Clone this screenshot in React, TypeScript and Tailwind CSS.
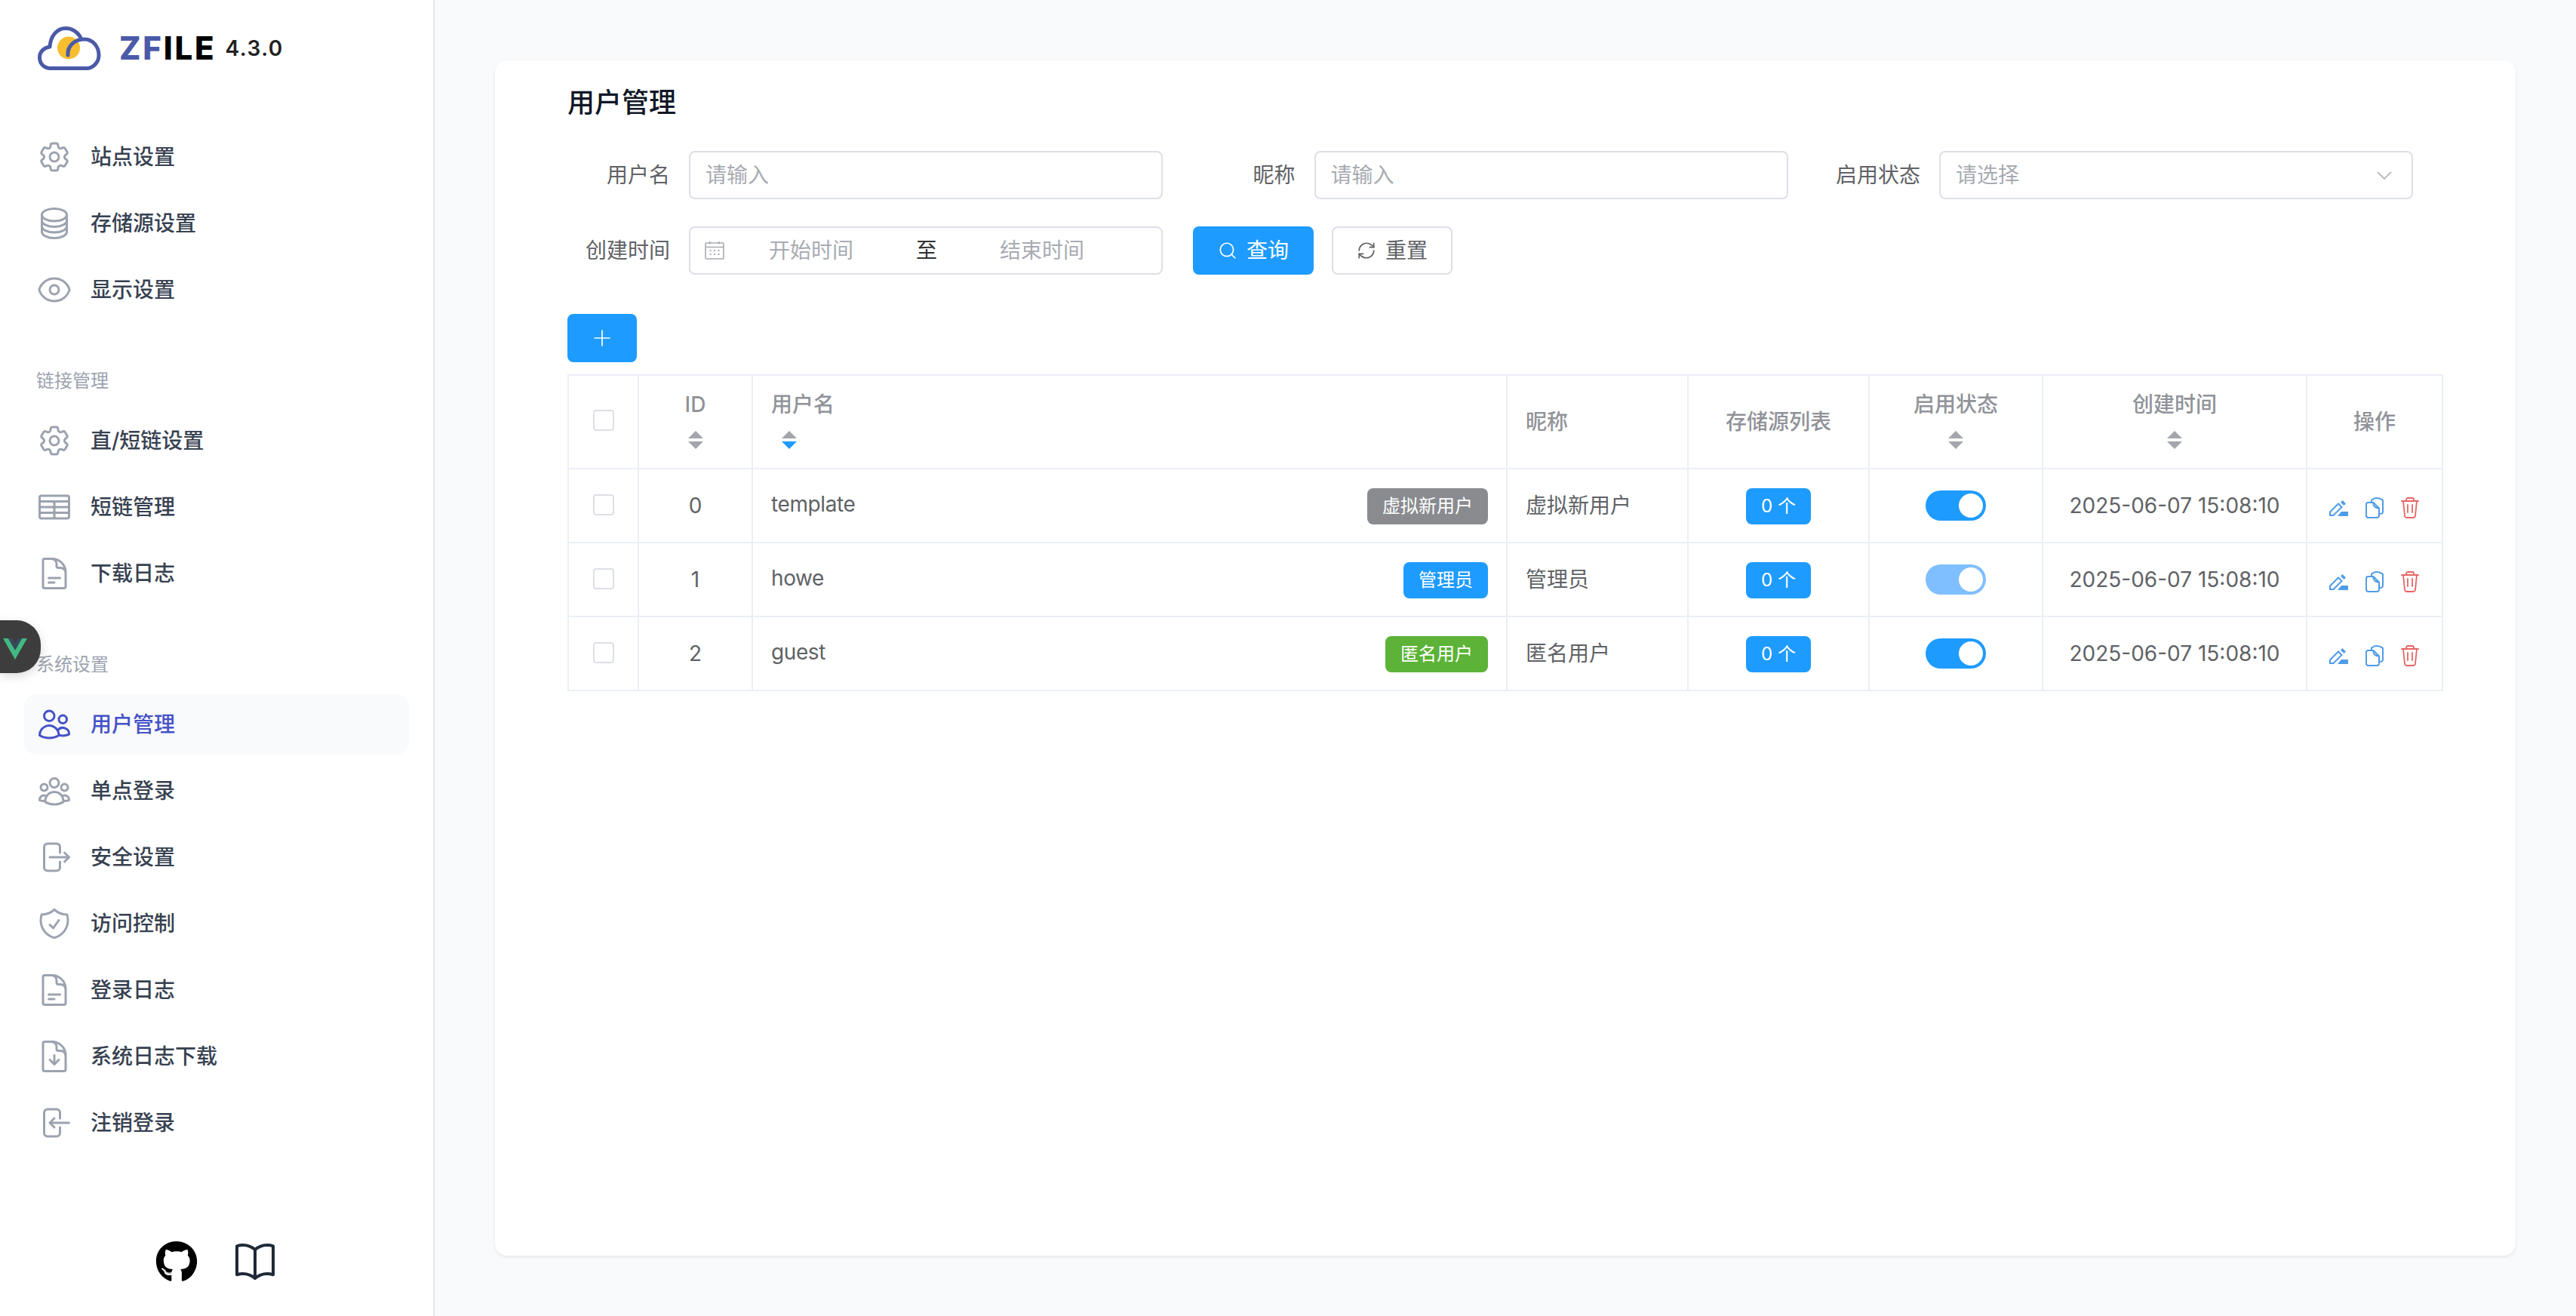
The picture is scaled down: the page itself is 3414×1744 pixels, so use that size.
import React from "react";
import {
  HiOutlineCog6Tooth,
  HiOutlineCircleStack,
  HiOutlineEye,
  HiOutlineTableCells,
  HiOutlineDocumentText,
  HiOutlineUsers,
  HiOutlineUserGroup,
  HiOutlineShieldCheck,
  HiOutlineDocumentArrowDown,
  HiOutlineBookOpen,
} from "react-icons/hi2";
import { FaGithub } from "react-icons/fa";
import { Search, RefreshCw, Plus } from "lucide-react";

type IconT = React.ComponentType<{ className?: string }>;

const LogoutOut: IconT = ({ className }) => (
  <svg viewBox="0 0 24 24" fill="none" stroke="currentColor" strokeWidth={1.5} strokeLinecap="round" strokeLinejoin="round" className={className}>
    <path d="M15.75 9V5.25A2.25 2.25 0 0013.5 3h-6a2.25 2.25 0 00-2.25 2.25v13.5A2.25 2.25 0 007.5 21h6a2.25 2.25 0 002.25-2.25V15m3 0l3-3m0 0l-3-3m3 3H9" />
  </svg>
);
const LogoutIn: IconT = ({ className }) => (
  <svg viewBox="0 0 24 24" fill="none" stroke="currentColor" strokeWidth={1.5} strokeLinecap="round" strokeLinejoin="round" className={className}>
    <path d="M15.75 9V5.25A2.25 2.25 0 0013.5 3h-6a2.25 2.25 0 00-2.25 2.25v13.5A2.25 2.25 0 007.5 21h6a2.25 2.25 0 002.25-2.25V15M12 9l-3 3m0 0l3 3m-3-3h12.75" />
  </svg>
);

function Logo() {
  return (
    <svg viewBox="0 0 84 58" width={84} height={58} fill="none">
      <circle cx="41" cy="28.5" r="15" fill="#f6bd2f" />
      <path
        d="M40 38C39 25 50 17 62 17C73 17 81 27 81 38C81 48 73 55.5 65 55.5H17C8 55.5 2.5 49 2.5 41C2.5 33 9 28 16 27C17 12 26 2.5 37 2.5C46 2.5 54 8 58 17"
        stroke="#4a5aa8"
        strokeWidth="5"
        strokeLinecap="round"
        strokeLinejoin="round"
      />
    </svg>
  );
}

function NavItem({ icon: Icon, label, active }: { icon: IconT; label: string; active?: boolean }) {
  return (
    <div
      className={`flex h-[80px] items-center gap-[24px] rounded-[16px] px-[16px] text-[28px] font-medium ${
        active ? "bg-[#f9fafb] text-[#4452c8]" : "text-[#374151]"
      }`}
    >
      <Icon className={`h-[48px] w-[48px] shrink-0 ${active ? "text-[#4452c8]" : "text-[#9ca3af]"}`} />
      <span>{label}</span>
    </div>
  );
}

function NavHeading({ children }: { children: React.ReactNode }) {
  return <div className="px-[16px] pb-[23px] pt-[65px] text-[24px] leading-[32px] text-[#9ca3af]">{children}</div>;
}

function Sidebar() {
  return (
    <aside className="flex h-full w-[576px] shrink-0 flex-col border-r-2 border-[#e5e7eb] bg-white px-[32px]">
      <div className="flex items-center pl-[18px] pt-[35px]">
        <Logo />
        <span className="ml-[24px] text-[42px] font-extrabold leading-[58px] tracking-[2.8px]">
          <span className="text-[#4a5aa8]">ZF</span>
          <span className="text-black">ILE</span>
        </span>
        <span className="ml-[12px] text-[28px] font-semibold leading-[58px] tracking-[1.5px] text-[#222222]">4.3.0</span>
      </div>
      <nav className="mt-[75px] flex flex-col">
        <div className="flex flex-col gap-[8px]">
          <NavItem icon={HiOutlineCog6Tooth} label="站点设置" />
          <NavItem icon={HiOutlineCircleStack} label="存储源设置" />
          <NavItem icon={HiOutlineEye} label="显示设置" />
        </div>
        <NavHeading>链接管理</NavHeading>
        <div className="flex flex-col gap-[8px]">
          <NavItem icon={HiOutlineCog6Tooth} label="直/短链设置" />
          <NavItem icon={HiOutlineTableCells} label="短链管理" />
          <NavItem icon={HiOutlineDocumentText} label="下载日志" />
        </div>
        <NavHeading>系统设置</NavHeading>
        <div className="flex flex-col gap-[8px]">
          <NavItem icon={HiOutlineUsers} label="用户管理" active />
          <NavItem icon={HiOutlineUserGroup} label="单点登录" />
          <NavItem icon={LogoutOut} label="安全设置" />
          <NavItem icon={HiOutlineShieldCheck} label="访问控制" />
          <NavItem icon={HiOutlineDocumentText} label="登录日志" />
          <NavItem icon={HiOutlineDocumentArrowDown} label="系统日志下载" />
          <NavItem icon={LogoutIn} label="注销登录" />
        </div>
      </nav>
      <div className="mt-auto flex items-center justify-center gap-[44px] pb-[40px] pl-[2px]">
        <FaGithub className="h-[56px] w-[56px] text-black" />
        <HiOutlineBookOpen className="h-[64px] w-[64px] text-[#1f2937]" />
      </div>
    </aside>
  );
}

function Field({ label, children }: { label: string; children: React.ReactNode }) {
  return (
    <div className="flex w-[789px] items-center">
      <label className="w-[161px] shrink-0 pr-[25px] text-right text-[28px] text-[#606266]">{label}</label>
      {children}
    </div>
  );
}

function TextInput() {
  return (
    <input
      placeholder="请输入"
      className="h-[64px] w-[628px] rounded-[8px] border-2 border-[#dcdfe6] bg-white px-[20px] text-[28px] outline-none placeholder:text-[#a8abb2]"
    />
  );
}

function CalendarIcon() {
  return (
    <svg viewBox="0 0 28 26" width={28} height={26} fill="none" stroke="#a8abb2" strokeWidth="1.6" className="shrink-0">
      <rect x="2" y="3" width="24" height="21" rx="1" />
      <path d="M2 8.5H26M8 1V4.5M20 1V4.5" />
      <path d="M7.5 13H9.5M13 13H15M18.5 13H20.5M7.5 18H9.5M13 18H15M18.5 18H20.5" strokeWidth="2" />
    </svg>
  );
}

function Chevron() {
  return (
    <svg viewBox="0 0 20 11" width={20} height={11} fill="none" stroke="#a8abb2" strokeWidth="1.6">
      <path d="M1 1L10 10L19 1" />
    </svg>
  );
}

function Carets({ active }: { active?: boolean }) {
  return (
    <span className="mt-[13px] flex w-[48px] flex-col items-center gap-[4px]">
      <span className="h-0 w-0 border-x-[10px] border-b-[10px] border-x-transparent border-b-[#a3a6ad]" />
      <span className={`h-0 w-0 border-x-[10px] border-t-[10px] border-x-transparent ${active ? "border-t-[#1e9bff]" : "border-t-[#a3a6ad]"}`} />
    </span>
  );
}

function SortHead({ children, left, active }: { children: React.ReactNode; left?: boolean; active?: boolean }) {
  return (
    <div className={`flex flex-col pb-[10px] ${left ? "items-start" : "items-center"}`}>
      <span className="h-[44px] leading-[44px]">{children}</span>
      <Carets active={active} />
    </div>
  );
}

function Checkbox({ className }: { className: string }) {
  return <span className={`mx-auto block h-[28px] w-[28px] rounded-[4px] border-2 border-[#dcdfe6] bg-white ${className}`} />;
}

function Tag({ children, color }: { children: React.ReactNode; color: string }) {
  return (
    <span className={`mt-[2px] inline-flex h-[48px] items-center justify-center rounded-[8px] px-[20px] text-[24px] text-white ${color}`}>
      {children}
    </span>
  );
}

function Toggle({ faded }: { faded?: boolean }) {
  return (
    <span className={`mx-auto flex h-[40px] w-[80px] items-center justify-end rounded-full pr-[4px] ${faded ? "bg-[#80bfff]" : "bg-[#1e9bff]"}`}>
      <span className="h-[32px] w-[32px] rounded-full bg-white" />
    </span>
  );
}

function EditIcon() {
  return (
    <svg viewBox="0 0 25 21" width={25} height={21} fill="#4f9ce8" stroke="none">
      <path d="M1 20V15.5L12 4.5L16.5 9L5.5 20Z" fill="none" stroke="#4f9ce8" strokeWidth="2" />
      <path d="M15 2.5L17.5 0L22 4.5L19.5 7Z" />
      <path d="M16 15H25V21H11Z" />
    </svg>
  );
}

function CopyIcon() {
  return (
    <svg viewBox="0 0 24 28" width={24} height={28} fill="none" stroke="#4f9ce8" strokeWidth="2" strokeLinejoin="round">
      <path d="M8 6.5V4.5C8 3 9.5 2.5 10.5 2.5C11 1.2 14 1 15 1C16.5 1 19 1.2 20 2.5C22 2.5 23 3.5 23 5V19C23 21 21.5 22 19 22H18" />
      <path d="M3.5 7H10.5L18 14.5V24C18 25.8 16.8 27 15 27H4C2 27 1 25.8 1 24V9.5C1 8 2 7 3.5 7Z" />
      <path d="M10.5 7C9.8 11 12.5 14.5 18 14.5" />
    </svg>
  );
}

function TrashIcon() {
  return (
    <svg viewBox="0 0 24 28" width={24} height={28} fill="none" stroke="#e86464" strokeWidth="1.8" strokeLinecap="round" strokeLinejoin="round">
      <path d="M1 5H23" />
      <path d="M7 5V3C7 1.8 8 1 9 1H15C16 1 17 1.8 17 3V5" />
      <path d="M3 5L5 24.5C5.2 26 6 27 7.5 27H16.5C18 27 18.8 26 19 24.5L21 5" />
      <path d="M9 10V20M15 10V20" />
    </svg>
  );
}

const rows = [
  { id: "0", name: "template", nick: "虚拟新用户", color: "bg-[#898b8f]", faded: false },
  { id: "1", name: "howe", nick: "管理员", color: "bg-[#1e9bff]", faded: true },
  { id: "2", name: "guest", nick: "匿名用户", color: "bg-[#5cb338]", faded: false },
];

const th = "border-2 border-[#ebeef5] px-[24px] text-[28px] font-medium text-[#909399]";
const td = "border-2 border-[#ebeef5] px-[24px] text-[28px] text-[#606266]";

function UserTable() {
  return (
    <table className="mt-[16px] w-[2484px] table-fixed border-collapse">
      <colgroup>
        <col className="w-[93px]" />
        <col className="w-[151px]" />
        <col className="w-[1000px]" />
        <col className="w-[240px]" />
        <col className="w-[240px]" />
        <col className="w-[230px]" />
        <col className="w-[350px]" />
        <col className="w-[180px]" />
      </colgroup>
      <thead>
        <tr className="h-[124px]">
          <th className={th}><Checkbox className="mb-[4px]" /></th>
          <th className={th}><SortHead>ID</SortHead></th>
          <th className={`${th} text-left`}><SortHead left active>用户名</SortHead></th>
          <th className={`${th} text-left`}>昵称</th>
          <th className={th}>存储源列表</th>
          <th className={th}><SortHead>启用状态</SortHead></th>
          <th className={th}><SortHead>创建时间</SortHead></th>
          <th className={th}>操作</th>
        </tr>
      </thead>
      <tbody>
        {rows.map((r) => (
          <tr key={r.id} className="h-[98px]">
            <td className={td}><Checkbox className="mb-[2px]" /></td>
            <td className={`${td} text-center`}>{r.id}</td>
            <td className={td}>
              <div className="flex items-center justify-between">
                <span className="mb-[4px] tracking-[-0.4px]">{r.name}</span>
                <Tag color={r.color}>{r.nick}</Tag>
              </div>
            </td>
            <td className={td}>{r.nick}</td>
            <td className={`${td} text-center`}><Tag color="bg-[#1e9bff]">0 个</Tag></td>
            <td className={td}><Toggle faded={r.faded} /></td>
            <td className={`${td} whitespace-nowrap text-center`}>2025-06-07 15:08:10</td>
            <td className={td}>
              <div className="flex items-center justify-center gap-[23px] pr-[2px] pt-[6px]">
                <EditIcon />
                <CopyIcon />
                <TrashIcon />
              </div>
            </td>
          </tr>
        ))}
      </tbody>
    </table>
  );
}

function Card() {
  return (
    <div className="h-full rounded-[16px] bg-white px-[96px] pt-[28px] shadow-[0_2px_4px_rgba(0,0,0,0.08)]">
      <h1 className="text-[36px] font-medium leading-[56px] text-[#111827]">用户管理</h1>
      <div className="mt-[36px] flex flex-col gap-[36px]">
        <div className="flex gap-[39.5px]">
          <Field label="用户名"><TextInput /></Field>
          <Field label="昵称"><TextInput /></Field>
          <Field label="启用状态">
            <div className="flex h-[64px] w-[628px] items-center justify-between rounded-[8px] border-2 border-[#dcdfe6] bg-white pl-[20px] pr-[26px] text-[28px] text-[#a8abb2]">
              <span>请选择</span>
              <Chevron />
            </div>
          </Field>
        </div>
        <div className="flex">
          <Field label="创建时间">
            <div className="flex h-[64px] w-[628px] items-center rounded-[8px] border-2 border-[#dcdfe6] bg-white pl-[18px] text-[28px] text-[#a8abb2]">
              <CalendarIcon />
              <span className="w-[228px] text-center">开始时间</span>
              <span className="ml-[25px] text-[#303133]">至</span>
              <span className="ml-[29px] w-[220px] text-center">结束时间</span>
            </div>
          </Field>
          <button className="ml-[40px] flex h-[64px] w-[160px] items-center justify-center gap-[12px] rounded-[8px] bg-[#1e9bff] text-[28px] text-white">
            <Search size={26} strokeWidth={1.6} />
            查询
          </button>
          <button className="ml-[24px] flex h-[64px] w-[160px] items-center justify-center gap-[12px] rounded-[8px] border-2 border-[#dcdfe6] bg-white text-[28px] text-[#606266]">
            <RefreshCw size={26} strokeWidth={1.6} />
            重置
          </button>
        </div>
      </div>
      <button className="mt-[52px] flex h-[64px] w-[92px] items-center justify-center rounded-[8px] bg-[#1e9bff] text-white">
        <Plus size={34} strokeWidth={1.2} />
      </button>
      <UserTable />
    </div>
  );
}

export default function App() {
  return (
    <div className="relative flex h-screen w-full overflow-hidden bg-[#f9fafb] font-[Inter,'Noto_Sans_CJK_SC',sans-serif]">
      <Sidebar />
      <main className="min-w-0 flex-1 p-[80px]">
        <Card />
      </main>
      <div className="absolute left-0 top-[822px] flex h-[70px] w-[54px] items-center rounded-r-[32px] bg-[#3d3d3d] pl-[4px] pt-[6px] shadow-[0_4px_14px_rgba(0,0,0,0.15)]">
        <svg viewBox="0 0 32 28" width={32} height={28}>
          <path d="M0 0H7L16 15.5L25 0H32L16 28Z" fill="#42b883" />
          <path d="M7 0H12L16 7L20 0H25L16 15.5Z" fill="#35495e" />
        </svg>
      </div>
    </div>
  );
}
